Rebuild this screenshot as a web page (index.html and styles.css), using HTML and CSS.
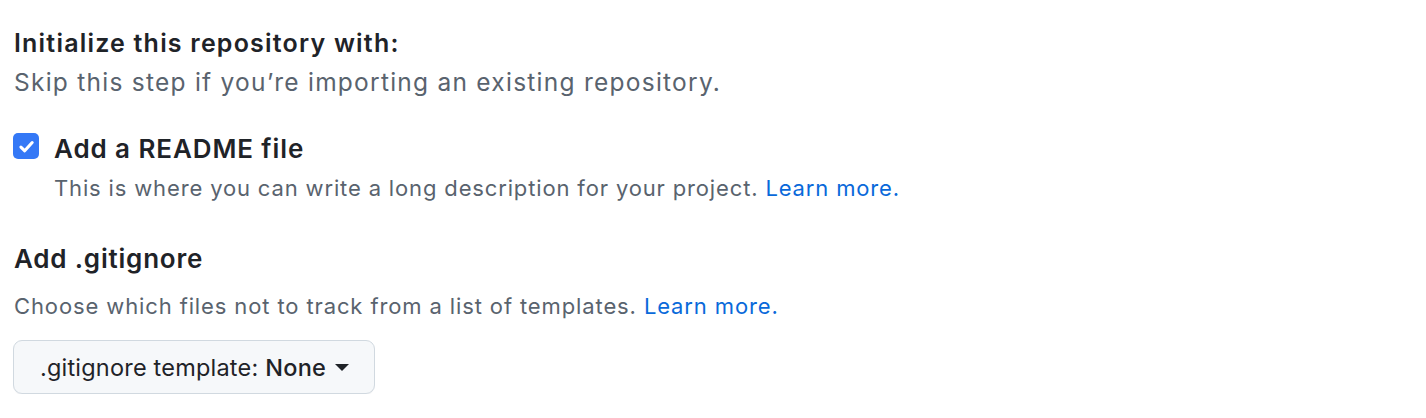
FILE: index.html
```html
<!DOCTYPE html>
<html lang="en">
<head>
<meta charset="utf-8">
<title>Initialize repository</title>
<link rel="stylesheet" href="styles.css">
</head>
<body>
<main class="page">
  <section class="init">
    <h3 class="init-title">Initialize this repository with:</h3>
    <p class="init-note">Skip this step if you’re importing an existing repository.</p>
  </section>

  <div class="check-row">
    <span class="checkbox" aria-hidden="true">
      <svg viewBox="0 0 16 16" width="19" height="19"><path d="M3.3 8.5 6.5 11.6 12.8 4.7" fill="none" stroke="#fff" stroke-width="2.6" stroke-linecap="round" stroke-linejoin="round"/></svg>
    </span>
    <div class="check-body">
      <div class="check-label">Add a README file</div>
      <p class="check-note">This is where you can write a long description for your project. <a href="#" class="link">Learn more.</a></p>
    </div>
  </div>

  <section class="gitignore">
    <h4 class="gi-title">Add .gitignore</h4>
    <p class="gi-note">Choose which files not to track from a list of templates. <a href="#" class="link">Learn more.</a></p>
    <button class="select-btn" type="button">
      <span class="btn-prefix">.gitignore template:</span> <span class="btn-value">None</span>
      <span class="caret"></span>
    </button>
  </section>
</main>
</body>
</html>
```
FILE: styles.css
```css
html, body {
  margin: 0;
  padding: 0;
  background: #ffffff;
}
body {
  font-family: Inter, "Noto Sans", "Liberation Sans", sans-serif;
  color: #1f2328;
}
.page {
  padding: 25px 14px 0 14px;
}
.init-title {
  margin: 0;
  font-size: 25px;
  line-height: 36px;
  font-weight: 600;
  letter-spacing: 1.2px;
  color: #1f2328;
}
.init-note {
  margin: 3px 0 0 0;
  font-size: 24.5px;
  line-height: 36px;
  letter-spacing: 1.25px;
  color: #59636e;
}
.check-row {
  display: flex;
  align-items: flex-start;
  gap: 15px;
  margin-top: 24px;
}
.checkbox {
  flex: none;
  width: 26px;
  height: 26px;
  margin-top: 9px;
  margin-left: -1px;
  border-radius: 5px;
  background: #3478f6;
  display: flex;
  align-items: center;
  justify-content: center;
}
.check-label {
  font-size: 26px;
  line-height: 36px;
  font-weight: 600;
  letter-spacing: 0.9px;
  color: #1f2328;
  margin-top: 7px;
}
.check-note {
  margin: 3px 0 0 0;
  font-size: 22px;
  line-height: 36px;
  letter-spacing: 0.85px;
  color: #59636e;
}
.link {
  color: #0969da;
  text-decoration: none;
}
.gitignore {
  margin-top: 35px;
}
.gi-title {
  margin: 0;
  font-size: 26px;
  line-height: 36px;
  font-weight: 600;
  letter-spacing: 0.8px;
  color: #1f2328;
}
.gi-note {
  margin: 11px 0 0 0;
  font-size: 22px;
  line-height: 36px;
  letter-spacing: 0.88px;
  color: #59636e;
}
.select-btn {
  margin-top: 16px;
  margin-left: -1px;
  display: inline-flex;
  align-items: center;
  height: 54px;
  padding: 0 25px 0 26px;
  font-family: inherit;
  font-size: 23.5px;
  letter-spacing: 0.2px;
  color: #1f2328;
  background: #f6f8fa;
  border: 1.5px solid #d1d9e0;
  border-radius: 9px;
  box-shadow: 0 1px 0 rgba(31,35,40,0.04);
}
.btn-prefix {
  font-weight: 400;
  margin-right: 7px;
}
.btn-value {
  font-weight: 500;
}
.caret {
  display: inline-block;
  margin-left: 9px;
  width: 0;
  height: 0;
  border-left: 7px solid transparent;
  border-right: 7px solid transparent;
  border-top: 7px solid #1f2328;
}
```
